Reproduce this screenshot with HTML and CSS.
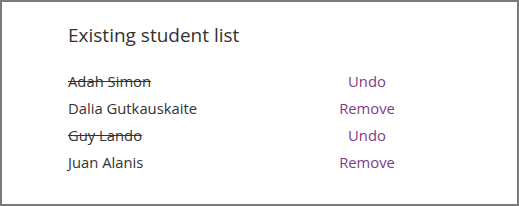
FILE: index.html
```html
<!DOCTYPE html>
<html lang="en">
<head>
    <meta charset="UTF-8">
    <title>Existing student list</title>
    <link rel="stylesheet" href="styles.css">
</head>
<body>
    <div class="panel">
        <h2>Existing student list</h2>
        <div class="students">
            <span class="name removed">Adah Simon</span>
            <a class="action" href="#">Undo</a>
            <span class="name">Dalia Gutkauskaite</span>
            <a class="action" href="#">Remove</a>
            <span class="name removed">Guy Lando</span>
            <a class="action" href="#">Undo</a>
            <span class="name">Juan Alanis</span>
            <a class="action" href="#">Remove</a>
        </div>
    </div>
</body>
</html>
```

FILE: styles.css
```css
body {
    margin: 0;
    font-family: 'Open Sans', 'Noto Sans', sans-serif;
    color: #333333;
    background: #ffffff;
}

.panel {
    box-sizing: border-box;
    width: 519px;
    height: 206px;
    border: 2px solid #7a7a7a;
    padding: 20px 0 0 66px;
}

h2 {
    margin: 0;
    font-size: 19px;
    font-weight: 400;
    line-height: 26px;
}

.students {
    display: grid;
    grid-template-columns: 231px 136px;
    grid-auto-rows: 27px;
    margin-top: 20px;
    font-size: 14.8px;
    line-height: 27px;
}

.name.removed {
    text-decoration: line-through;
}

.action {
    text-align: center;
    color: #7f3a86;
    text-decoration: none;
}
```
